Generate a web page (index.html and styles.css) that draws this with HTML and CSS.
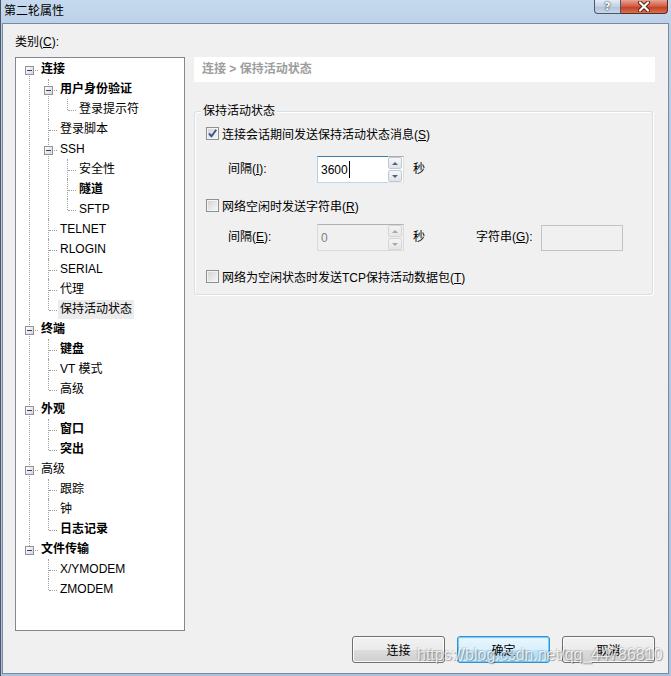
FILE: index.html
```html
<!DOCTYPE html>
<html lang="zh-CN">
<head>
    <meta charset="UTF-8">
    <meta name="viewport" content="width=device-width, initial-scale=1.0">
    <title>第二轮属性</title>
    <link rel="stylesheet" href="styles.css">
</head>
<body>
<div class="window">
    <div class="titlebar">
        <span class="title">第二轮属性</span>
        <div class="caption-buttons">
            <span class="cap-help">?</span>
            <span class="cap-close">
                <svg width="16" height="11" viewBox="0 0 16 11">
                    <path d="M4 1.5 L12 9.5 M12 1.5 L4 9.5" stroke="#5a1f12" stroke-width="4" stroke-linecap="round"/>
                    <path d="M4 1.5 L12 9.5 M12 1.5 L4 9.5" stroke="#fff" stroke-width="2.2" stroke-linecap="round"/>
                </svg>
            </span>
        </div>
    </div>

    <div class="client">
        <div class="category-label">类别(<u>C</u>):</div>
        <div class="main">
            <!-- category tree -->
            <div class="tree">
                <ul>
                    <li class="first"><div class="node"><span class="box"></span><span class="label bold">连接</span></div>
                        <ul>
                            <li><div class="node"><span class="box"></span><span class="label bold">用户身份验证</span></div>
                                <ul>
                                    <li class="last"><div class="node"><span class="label">登录提示符</span></div></li>
                                </ul>
                            </li>
                            <li><div class="node"><span class="label">登录脚本</span></div></li>
                            <li><div class="node"><span class="box"></span><span class="label">SSH</span></div>
                                <ul>
                                    <li><div class="node"><span class="label">安全性</span></div></li>
                                    <li><div class="node"><span class="label bold">隧道</span></div></li>
                                    <li class="last"><div class="node"><span class="label">SFTP</span></div></li>
                                </ul>
                            </li>
                            <li><div class="node"><span class="label">TELNET</span></div></li>
                            <li><div class="node"><span class="label">RLOGIN</span></div></li>
                            <li><div class="node"><span class="label">SERIAL</span></div></li>
                            <li><div class="node"><span class="label">代理</span></div></li>
                            <li class="last"><div class="node"><span class="label selected">保持活动状态</span></div></li>
                        </ul>
                    </li>
                    <li><div class="node"><span class="box"></span><span class="label bold">终端</span></div>
                        <ul>
                            <li><div class="node"><span class="label bold">键盘</span></div></li>
                            <li><div class="node"><span class="label">VT 模式</span></div></li>
                            <li class="last"><div class="node"><span class="label">高级</span></div></li>
                        </ul>
                    </li>
                    <li><div class="node"><span class="box"></span><span class="label bold">外观</span></div>
                        <ul>
                            <li><div class="node"><span class="label bold">窗口</span></div></li>
                            <li class="last"><div class="node"><span class="label bold">突出</span></div></li>
                        </ul>
                    </li>
                    <li><div class="node"><span class="box"></span><span class="label">高级</span></div>
                        <ul>
                            <li><div class="node"><span class="label">跟踪</span></div></li>
                            <li><div class="node"><span class="label">钟</span></div></li>
                            <li class="last"><div class="node"><span class="label bold">日志记录</span></div></li>
                        </ul>
                    </li>
                    <li class="last"><div class="node"><span class="box"></span><span class="label bold">文件传输</span></div>
                        <ul>
                            <li><div class="node"><span class="label">X/YMODEM</span></div></li>
                            <li class="last"><div class="node"><span class="label">ZMODEM</span></div></li>
                        </ul>
                    </li>
                </ul>
            </div>

            <!-- settings page -->
            <div class="panel">
                <div class="panel-header">连接 &gt; 保持活动状态</div>
                <fieldset class="group">
                    <legend>保持活动状态</legend>

                    <div class="check-row">
                        <span class="checkbox">
                            <svg width="11" height="11" viewBox="0 0 11 11">
                                <path d="M2 5.5 L4.5 8.2 L9.2 1.8" fill="none" stroke="#3a4f8e" stroke-width="1.9"/>
                            </svg>
                        </span>
                        <span>连接会话期间发送保持活动状态消息(<u>S</u>)</span>
                    </div>

                    <div class="field-row row-a">
                        <span class="field-label">间隔(<u>I</u>):</span>
                        <div class="spin">
                            <div class="spin-input focused">3600<span class="caret"></span></div>
                            <div class="spin-buttons">
                                <span class="spin-btn"><span class="arrow-up"></span></span>
                                <span class="spin-btn"><span class="arrow-down"></span></span>
                            </div>
                        </div>
                        <span class="unit">秒</span>
                    </div>

                    <div class="check-row row-b">
                        <span class="checkbox"></span>
                        <span>网络空闲时发送字符串(<u>R</u>)</span>
                    </div>

                    <div class="field-row row-c">
                        <span class="field-label">间隔(<u>E</u>):</span>
                        <div class="spin disabled">
                            <div class="spin-input">0</div>
                            <div class="spin-buttons">
                                <span class="spin-btn"><span class="arrow-up"></span></span>
                                <span class="spin-btn"><span class="arrow-down"></span></span>
                            </div>
                        </div>
                        <span class="unit">秒</span>
                        <span class="string-label">字符串(<u>G</u>):</span>
                        <div class="string-input"></div>
                    </div>

                    <div class="check-row row-d">
                        <span class="checkbox"></span>
                        <span>网络为空闲状态时发送TCP保持活动数据包(<u>T</u>)</span>
                    </div>
                </fieldset>
            </div>
        </div>

        <div class="buttons">
            <button class="btn">连接</button>
            <button class="btn btn-default">确定</button>
            <button class="btn">取消</button>
        </div>
    </div>

    <div class="watermark">https://blog.csdn.net/qq_44786810</div>
</div>
</body>
</html>
```

FILE: styles.css
```css
body {
    margin: 0;
    font: 12px "Liberation Sans", "Noto Sans CJK SC", sans-serif;
    color: #000;
}
.window {
    position: relative;
    width: 671px;
    height: 676px;
    display: flex;
    flex-direction: column;
    overflow: hidden;
    background: linear-gradient(to bottom, #c6d9ee 0, #b9cfe8 30px, #a9c2df 100%);
    box-shadow: inset 1px 0 0 #4d5664;
}

/* Title bar */
.titlebar {
    height: 23px;
    flex-shrink: 0;
    display: flex;
    align-items: flex-start;
}
.title {
    padding: 4px 0 0 4px;
    line-height: 14px;
}
.caption-buttons {
    margin-left: auto;
    margin-right: 3px;
    display: flex;
}
.cap-help {
    width: 27px;
    height: 14px;
    box-sizing: border-box;
    border: 1px solid #4b5668;
    border-top: none;
    border-radius: 0 0 0 4px;
    background: linear-gradient(#e6edf6, #c3d1e2 50%, #b0c2d8 51%, #c9d7e7);
    color: #fff;
    font: bold 11px "DejaVu Sans", sans-serif;
    line-height: 13px;
    text-align: center;
    text-shadow: 0 0 2px #2c3a4f, 0 0 1px #2c3a4f;
}
.cap-close {
    width: 47px;
    height: 14px;
    box-sizing: border-box;
    border: 1px solid #5d2a22;
    border-top: none;
    border-left: none;
    border-radius: 0 0 4px 0;
    background: linear-gradient(#e8a595, #d2583f 50%, #c33a22 51%, #d4714f);
    display: flex;
    justify-content: center;
    align-items: center;
}

/* Client area */
.client {
    flex: 1;
    margin: 0 2px 2px 2px;
    border: 1px solid #7a8ba0;
    background: #f0f0f0;
    padding: 11px 13px 0 12px;
    display: flex;
    flex-direction: column;
}
.category-label {
    line-height: 14px;
    margin-bottom: 8px;
}
.main {
    display: flex;
    gap: 9px;
    height: 574px;
}

/* Tree */
.tree {
    width: 170px;
    box-sizing: border-box;
    border: 1px solid #828790;
    background: #fff;
    padding-top: 1px;
}
.tree ul {
    list-style: none;
    margin: 0;
    padding: 0;
}
.tree ul ul {
    padding-left: 19px;
}
.tree li {
    position: relative;
}
.tree li::before {
    content: "";
    position: absolute;
    left: 13px;
    top: 0;
    bottom: 0;
    border-left: 1px dotted #a0a0a0;
}
.tree li.first::before {
    top: 11px;
}
.tree li.last::before {
    bottom: auto;
    height: 11px;
}
.node {
    position: relative;
    height: 20px;
    padding-left: 23px;
}
.node::before {
    content: "";
    position: absolute;
    left: 14px;
    top: 11px;
    width: 8px;
    border-top: 1px dotted #a0a0a0;
}
.box {
    position: absolute;
    left: 9px;
    top: 7px;
    width: 7px;
    height: 7px;
    border: 1px solid #919191;
    background: linear-gradient(135deg, #fff, #d6d6d6);
    z-index: 1;
}
.box::after {
    content: "";
    position: absolute;
    left: 1px;
    top: 3px;
    width: 5px;
    height: 1px;
    background: #2c3e86;
}
.label {
    display: inline-block;
    padding: 0 2px;
    margin-top: 1px;
    line-height: 19px;
    white-space: nowrap;
}
.bold {
    font-weight: bold;
}
.selected {
    background: #ececec;
}

/* Right panel */
.panel {
    flex: 1;
    display: flex;
    flex-direction: column;
}
.panel-header {
    height: 25px;
    line-height: 25px;
    background: #fff;
    padding-left: 8px;
    color: #9d9d9d;
    font-weight: bold;
}
.group {
    margin: 22px 2px 0 0;
    padding: 5px 0 8px 11px;
    border: 1px solid #d5dfe5;
    border-radius: 3px;
    box-shadow: inset 1px 1px 0 #fff, 1px 1px 0 #fff;
    min-width: 0;
}
.group legend {
    padding: 0 2px;
    margin-left: -5px;
    line-height: 14px;
    background: #f0f0f0;
}
.check-row {
    display: flex;
    align-items: center;
    height: 20px;
    gap: 3px;
}
.checkbox {
    width: 13px;
    height: 13px;
    box-sizing: border-box;
    border: 1px solid #8e8f8f;
    background: linear-gradient(135deg, #d2d2d2, #f8f8f8);
    box-shadow: inset 0 0 0 1px #f4f4f4;
    display: flex;
    align-items: center;
    justify-content: center;
}
.row-b {
    margin-top: 12px;
}
.row-d {
    margin-top: 15px;
}
.field-row {
    display: flex;
    align-items: center;
    height: 27px;
    padding-left: 22px;
}
.row-a {
    margin-top: 13px;
}
.row-c {
    margin-top: 9px;
}
.field-label {
    width: 89px;
    margin-bottom: 5px;
}
.spin {
    display: flex;
    width: 87px;
    height: 27px;
}
.spin-input {
    flex: 1;
    box-sizing: border-box;
    border: 1px solid;
    border-color: #abadb3 #dbdfe6 #e3e9ef #e2e3ea;
    border-right: none;
    background: #fff;
    padding-left: 3px;
    display: flex;
    align-items: center;
}
.spin-input.focused {
    border-color: #3d7bad #a4c9e3 #b7d9ed #b5cfe7;
}
.caret {
    width: 1px;
    height: 17px;
    margin-left: 1px;
    background: #000;
}
.spin-buttons {
    width: 16px;
    box-sizing: border-box;
    border: 1px solid;
    border-color: #abadb3 #dbdfe6 #e3e9ef #e2e3ea;
    border-left: none;
    background: #fff;
    display: flex;
    flex-direction: column;
    gap: 1px;
    padding: 0 1px 0 0;
}
.spin-btn {
    flex: 1;
    border: 1px solid #c3c8ce;
    border-radius: 2px;
    background: linear-gradient(#f6f7f9, #dfe3e8);
    display: flex;
    align-items: center;
    justify-content: center;
}
.arrow-up,
.arrow-down {
    width: 0;
    height: 0;
    border-left: 3px solid transparent;
    border-right: 3px solid transparent;
}
.arrow-up {
    border-bottom: 3px solid #4d6185;
}
.arrow-down {
    border-top: 3px solid #4d6185;
}
.spin.disabled .spin-input {
    background: #f0f0f0;
    color: #808080;
    border-color: #adb2b5 #dadada #dadada #dadada;
}
.spin.disabled .spin-buttons {
    background: #f0f0f0;
    border-color: #adb2b5 #dadada #dadada #dadada;
}
.spin.disabled .spin-btn {
    border-color: #d5d5d5;
    background: linear-gradient(#f4f4f4, #e6e6e6);
}
.spin.disabled .arrow-up {
    border-bottom-color: #a9a9a9;
}
.spin.disabled .arrow-down {
    border-top-color: #a9a9a9;
}
.unit {
    margin-left: 9px;
    width: 63px;
    margin-bottom: 5px;
}
.string-label {
    width: 65px;
    margin-bottom: 5px;
}
.string-input {
    width: 82px;
    height: 26px;
    box-sizing: border-box;
    border: 1px solid #c2c2c2;
    background: #f0f0f0;
    margin-top: 1px;
}

/* Dialog buttons */
.buttons {
    display: flex;
    justify-content: flex-end;
    gap: 12px;
    margin-top: 5px;
}
.btn {
    width: 93px;
    height: 27px;
    padding: 0;
    box-sizing: border-box;
    border: 1px solid #707070;
    border-radius: 3px;
    background: linear-gradient(#f2f2f2 0%, #ebebeb 50%, #dddddd 51%, #cfcfcf 100%);
    box-shadow: inset 0 0 0 1px #fbfbfb;
    font: inherit;
    color: #000;
}
.btn-default {
    border-color: #3c8fcf;
    background: linear-gradient(#eaf6fd 0%, #d9f0fc 50%, #bee6fd 51%, #a7d9f5 100%);
    box-shadow: inset 0 0 0 1px #6fd0fb, inset 0 0 0 2px #dff3fd;
}

/* CSDN watermark over the bottom */
.watermark {
    position: absolute;
    left: 417px;
    top: 646px;
    font: 16px "Liberation Sans", sans-serif;
    color: rgba(255, 255, 255, 0.75);
    text-shadow: 1px 1px 1px rgba(0, 0, 0, 0.35), -1px -1px 1px rgba(0, 0, 0, 0.15);
    white-space: nowrap;
}
```
